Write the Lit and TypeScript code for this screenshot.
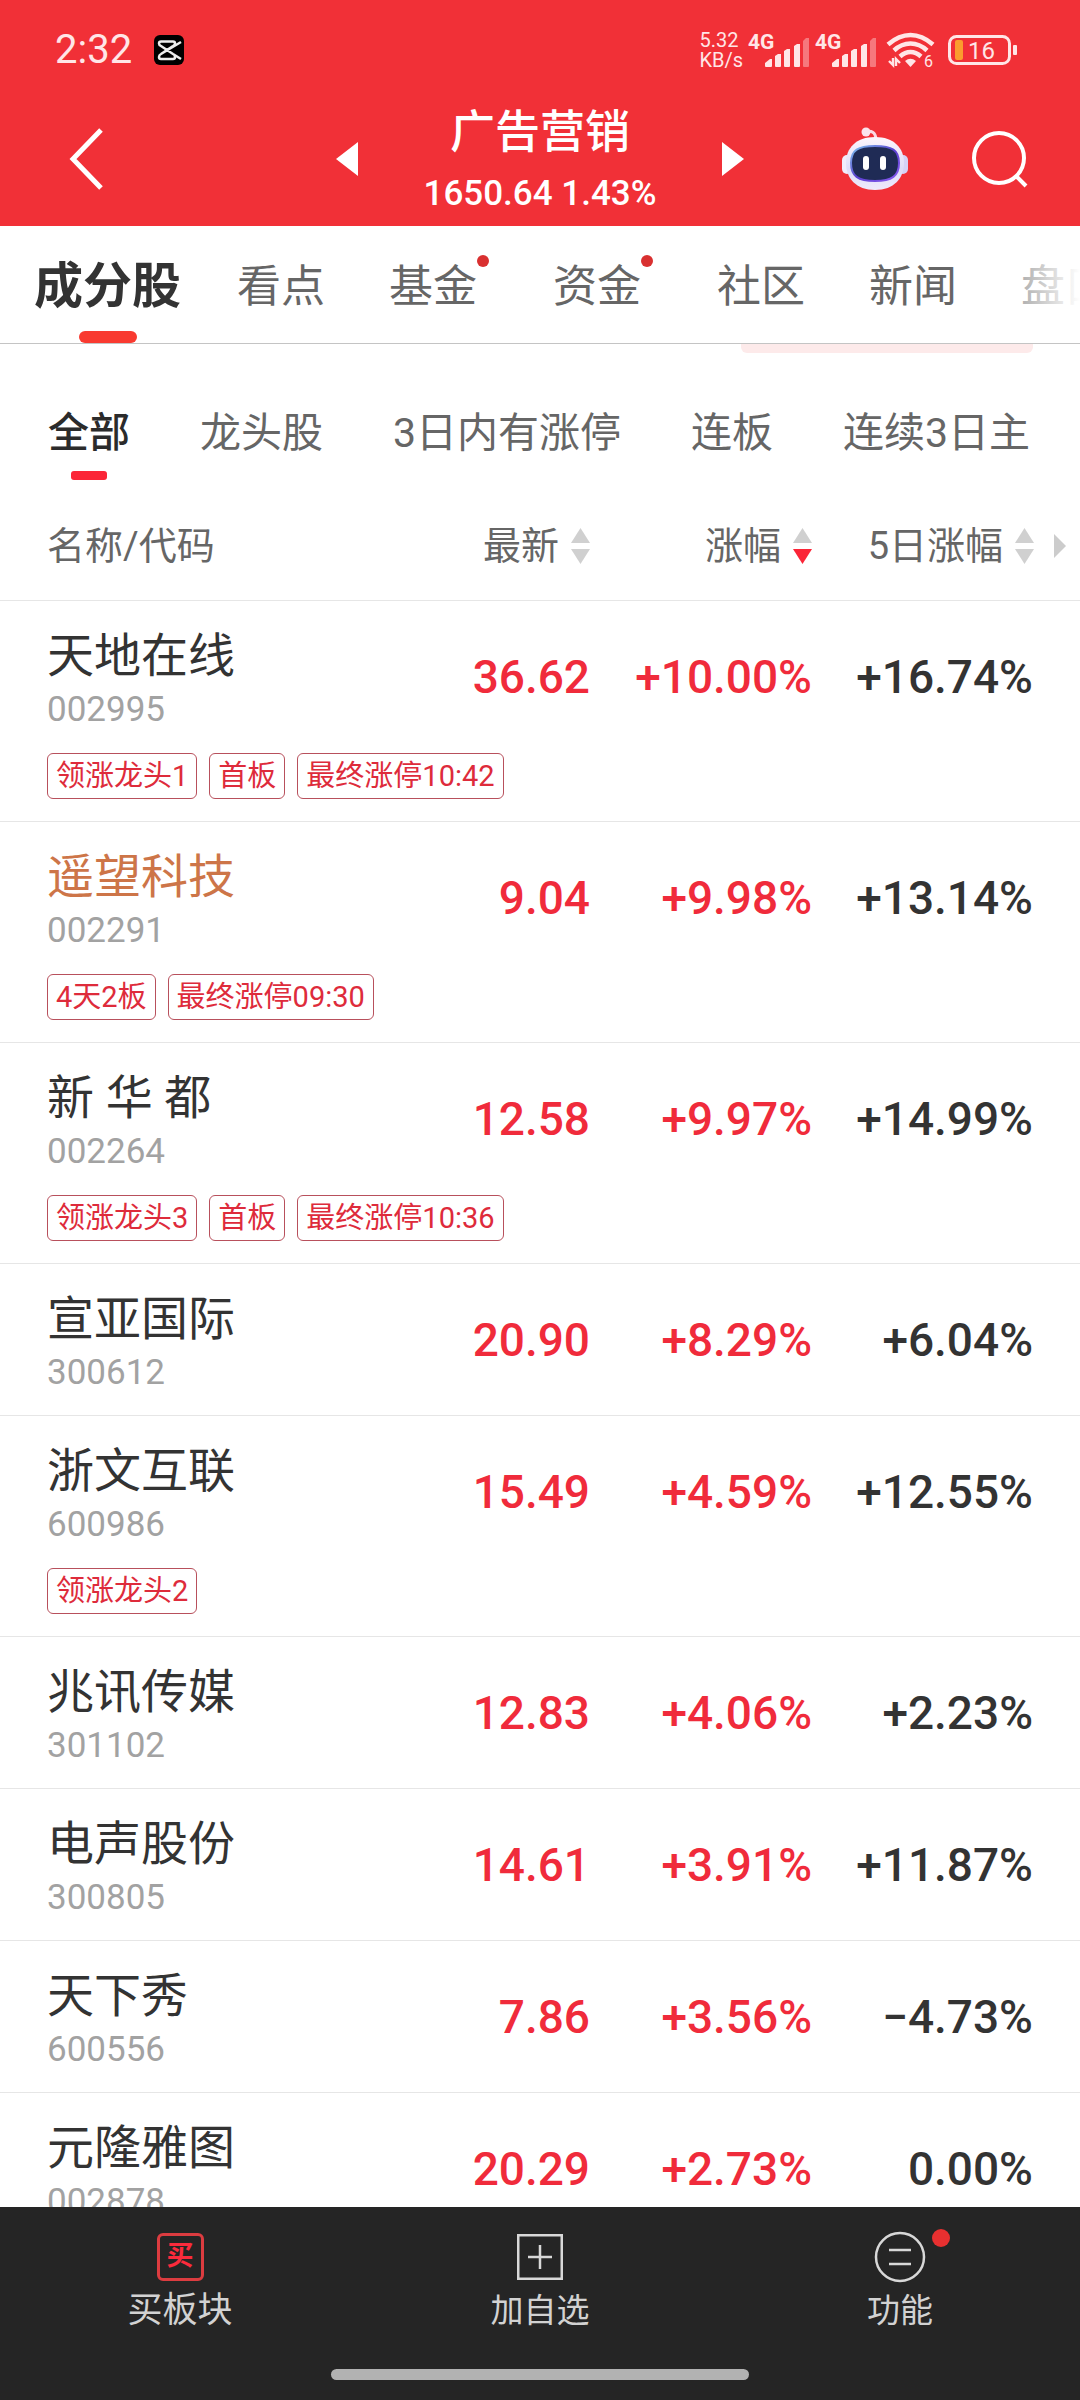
import { LitElement, html, css, svg, nothing } from "lit";
import { customElement, property, state } from "lit/decorators.js";
import { classMap } from "lit/directives/class-map.js";

interface Stock {
  name: string;
  code: string;
  price: string;
  change: string;
  fiveDay: string;
  held?: boolean;
  tags?: string[];
}

const STOCKS: Stock[] = [
  { name: "天地在线", code: "002995", price: "36.62", change: "+10.00%", fiveDay: "+16.74%", tags: ["领涨龙头1", "首板", "最终涨停10:42"] },
  { name: "遥望科技", code: "002291", price: "9.04", change: "+9.98%", fiveDay: "+13.14%", held: true, tags: ["4天2板", "最终涨停09:30"] },
  { name: "新 华 都", code: "002264", price: "12.58", change: "+9.97%", fiveDay: "+14.99%", tags: ["领涨龙头3", "首板", "最终涨停10:36"] },
  { name: "宣亚国际", code: "300612", price: "20.90", change: "+8.29%", fiveDay: "+6.04%" },
  { name: "浙文互联", code: "600986", price: "15.49", change: "+4.59%", fiveDay: "+12.55%", tags: ["领涨龙头2"] },
  { name: "兆讯传媒", code: "301102", price: "12.83", change: "+4.06%", fiveDay: "+2.23%" },
  { name: "电声股份", code: "300805", price: "14.61", change: "+3.91%", fiveDay: "+11.87%" },
  { name: "天下秀", code: "600556", price: "7.86", change: "+3.56%", fiveDay: "−4.73%" },
  { name: "元隆雅图", code: "002878", price: "20.29", change: "+2.73%", fiveDay: "0.00%" },
];

const TABS = [
  { label: "成分股" },
  { label: "看点" },
  { label: "基金", dot: true },
  { label: "资金", dot: true },
  { label: "社区" },
  { label: "新闻" },
  { label: "盘口" },
];

const FILTERS = ["全部", "龙头股", "3日内有涨停", "连板", "连续3日主"];

const FONT = css`Roboto, "Noto Sans CJK SC", sans-serif`;

const resets = css`
  :host,
  * {
    box-sizing: border-box;
  }
  button {
    appearance: none;
    margin: 0;
    padding: 0;
    border: 0;
    background: none;
    color: inherit;
    font: inherit;
    cursor: pointer;
  }
  svg {
    display: block;
    flex: none;
    overflow: visible;
  }
`;

/* Phone status bar: clock, network speed, signal, wifi, battery */
@customElement("status-bar")
class StatusBar extends LitElement {
  static styles = [
    resets,
    css`
      :host {
        display: flex;
        align-items: center;
        height: 100px;
        padding: 0 62px 0 55px;
        color: #ffe6e7;
      }
      .clock {
        font-size: 40px;
        line-height: 44px;
        margin-right: 22px;
      }
      .speed {
        margin-left: auto;
        margin-right: 5px;
        font-size: 20px;
        line-height: 20px;
      }
      .speed span {
        display: block;
      }
      .signal {
        margin-right: 5px;
      }
      .wifi {
        margin: 0 14px 0 5px;
      }
      text {
        font-family: ${FONT};
        fill: #ffe6e7;
      }
    `,
  ];

  private signal() {
    return svg`
      <svg class="signal" width="62" height="36" viewBox="0 0 62 36" role="img" aria-label="4G">
        <text x="0" y="17" font-size="21" font-weight="700">4G</text>
        <g fill="#ffe6e7">
          <path d="M17 34v-3l5-4h2v7q0 1-1 1h-5q-1 0-1-1z" />
          <path d="M27 34V24l3-2h3v12q0 1-1 1h-4q-1 0-1-1z" />
          <path d="M36 34V19l3-2h3v17q0 1-1 1h-4q-1 0-1-1z" />
          <path d="M46 34V14l3-2h3v22q0 1-1 1h-4q-1 0-1-1z" />
          <path d="M55 34V9l3-3h3v28q0 1-1 1h-4q-1 0-1-1z" opacity=".4" />
        </g>
      </svg>`;
  }

  render() {
    return html`
      <span class="clock">2:32</span>
      <svg width="30" height="30" viewBox="0 0 30 30" aria-hidden="true">
        <rect width="30" height="30" rx="6" fill="#000" />
        <path
          d="M27 7 7 19q-2 1-2 3v0q0 2 2 2h12q2 0 2-2v0q0-2-2-3L7 11q-2-1-2-2.500q0-2 2-2h12q2 0 2 2v0q0 1.500-2 2.500M7 19l12-8M19 19l8 5"
          fill="none" stroke="#eee" stroke-width="2.500" />
      </svg>
      <div class="speed"><span>5.32</span><span>KB/s</span></div>
      ${this.signal()}${this.signal()}
      <svg class="wifi" width="47" height="36" viewBox="0 0 47 36" role="img" aria-label="Wi-Fi">
        <g fill="none" stroke="#ffe6e7" stroke-width="4.500">
          <path d="M1 12.500Q12 3 23.500 3T46 12.500" />
          <path d="M7 18.500Q14.500 11.500 23.500 11.500T40 18.500" />
          <path d="M13 24.500Q18 20 23.500 20T34 24.500" />
        </g>
        <path d="M18 29q5.500-4.500 11 0l-5.500 6z" fill="#ffe6e7" />
        <path d="M2 29l4 4V26M9 34v-7l4 4" fill="none" stroke="#ffe6e7" stroke-width="2.400" />
        <text x="37" y="35" font-size="16">6</text>
      </svg>
      <svg width="70" height="32" viewBox="0 0 70 32" role="img" aria-label="16%">
        <rect x="1.500" y="2.500" width="60" height="27" rx="7" fill="none" stroke="#ffe6e7" stroke-width="3" />
        <rect x="7" y="6" width="8" height="20" rx="2" fill="#fb9d2e" />
        <rect x="65" y="11" width="4" height="10" rx="1" fill="#ffe6e7" />
        <text x="20" y="25" font-size="24">16</text>
      </svg>
    `;
  }
}

/* Red title bar with the sector name, its index and the page actions */
@customElement("title-bar")
class TitleBar extends LitElement {
  static styles = [
    resets,
    css`
      :host {
        display: grid;
        grid-template-columns: 1fr auto 1fr;
        padding-top: 4px;
        color: #fff;
      }
      .side {
        display: flex;
        align-items: center;
        padding-bottom: 12px;
      }
      .left {
        justify-content: space-between;
        padding-right: 66px;
        padding-left: 70px;
      }
      .right {
        padding-left: 66px;
        padding-right: 52px;
        gap: 64px;
      }
      .robot {
        margin-left: auto;
      }
      .title {
        text-align: center;
      }
      h1 {
        margin: 0;
        font-size: 45px;
        line-height: 58px;
        font-weight: 500;
      }
      p {
        margin: 0;
        font-size: 35px;
        line-height: 64px;
        font-weight: 500;
      }
    `,
  ];

  render() {
    return html`
      <div class="side left">
        <button aria-label="返回">
          <svg width="34" height="62" viewBox="0 0 34 62">
            <path d="M31 2 3 31l28 29" fill="none" stroke="#fff" stroke-width="5" />
          </svg>
        </button>
        <button aria-label="上一个">
          <svg width="22" height="34" viewBox="0 0 22 34"><path d="M22 0v34L0 17z" fill="#fff" /></svg>
        </button>
      </div>
      <div class="title">
        <h1>广告营销</h1>
        <p>1650.64 1.43%</p>
      </div>
      <div class="side right">
        <button aria-label="下一个">
          <svg width="22" height="34" viewBox="0 0 22 34"><path d="M0 0v34l22-17z" fill="#fff" /></svg>
        </button>
        <button class="robot" aria-label="智能助手">
          <svg width="66" height="64" viewBox="0 0 66 64">
            <defs>
              <linearGradient id="shell" x1="0" y1="0" x2="0" y2="1">
                <stop offset="0" stop-color="#fdf6fc" />
                <stop offset=".6" stop-color="#dedcf8" />
                <stop offset="1" stop-color="#efeafc" />
              </linearGradient>
              <linearGradient id="rim" x1="0" y1="0" x2="1" y2="1">
                <stop offset="0" stop-color="#7fc6ee" />
                <stop offset=".5" stop-color="#5a3fd0" />
                <stop offset="1" stop-color="#8a5cf0" />
              </linearGradient>
            </defs>
            <path d="M23 5q10-3 11 7" fill="none" stroke="#fbd9e4" stroke-width="3" />
            <circle cx="24" cy="5" r="4.500" fill="#fbe3ec" />
            <rect x="0" y="28" width="10" height="19" rx="5" fill="#f1ecfb" />
            <rect x="56" y="28" width="10" height="19" rx="5" fill="#d6d2f7" />
            <path d="M33 10c19 0 29 11 29 26S52 63 33 63 4 51 4 36s10-26 29-26z" fill="url(#shell)" />
            <path d="M33 19c17 0 24 4 24 17s-7 18-24 18S9 49 9 36s7-17 24-17z" fill="#1f2b55" stroke="url(#rim)" stroke-width="2" />
            <rect x="21" y="29" width="6" height="14" rx="3" fill="#fff" />
            <rect x="38" y="29" width="6" height="14" rx="3" fill="#fff" />
          </svg>
        </button>
        <button aria-label="搜索">
          <svg width="56" height="56" viewBox="0 0 56 56">
            <g fill="none" stroke="#fff" stroke-width="4">
              <circle cx="27" cy="27" r="25" />
              <path d="M44 45l10 10" />
            </g>
          </svg>
        </button>
      </div>
    `;
  }
}

/* Pair of up/down arrows beside a sortable column heading */
@customElement("sort-arrows")
class SortArrows extends LitElement {
  @property() direction = "";
  static styles = [
    resets,
    css`
      :host {
        display: block;
      }
      .idle {
        fill: #d0d0d0;
      }
      .on {
        fill: #fb2537;
      }
    `,
  ];
  render() {
    return html`
      <svg width="19" height="36" viewBox="0 0 19 36" aria-hidden="true">
        <path class=${this.direction === "asc" ? "on" : "idle"} d="M9.500 0 19 15H0z" />
        <path class=${this.direction === "desc" ? "on" : "idle"} d="M0 21h19L9.500 36z" />
      </svg>
    `;
  }
}

/* Main tabs and the quick filters below them */
@customElement("tab-strip")
class TabStrip extends LitElement {
  @state() private tab = 0;
  @state() private filter = 0;

  static styles = [
    resets,
    css`
      :host {
        display: block;
      }
      .tabs {
        position: relative;
        display: flex;
        height: 118px;
        padding-left: 10px;
        border-bottom: 1px solid #c4c4c4;
        overflow: hidden;
        color: #666;
      }
      .tabs::after {
        content: "";
        position: absolute;
        top: 0;
        right: 0;
        bottom: 0;
        width: 80px;
        background: linear-gradient(to right, rgba(255, 255, 255, 0.3), #fff);
        pointer-events: none;
      }
      .tab {
        position: relative;
        display: flex;
        flex: none;
        padding: 5px 32px 0;
        font-size: 44px;
        line-height: 112px;
      }
      .tab.on {
        padding: 5px 24px 0;
        font-size: 49px;
        font-weight: 700;
        color: #333;
      }
      .tab.on::after {
        content: "";
        position: absolute;
        left: 50%;
        bottom: 0;
        width: 58px;
        height: 12px;
        margin-left: -29px;
        border-radius: 6px;
        background: #f93a30;
      }
      .dot {
        width: 12px;
        height: 12px;
        margin-top: 24px;
        border-radius: 50%;
        background: #d93030;
      }
      .promo {
        width: 292px;
        height: 9px;
        margin: 0 47px 0 auto;
        border-radius: 0 0 6px 6px;
        background: #fdeaea;
      }
      .filters {
        display: flex;
        gap: 70px;
        padding: 45px 47px 0 48px;
        overflow: hidden;
        color: #666;
      }
      .filter {
        flex: none;
        font-size: 41px;
        line-height: 70px;
      }
      .filter::after {
        content: "";
        display: block;
        width: 36px;
        height: 9px;
        margin: 3px auto 0;
        border-radius: 3px;
      }
      .filter.on {
        font-weight: 500;
        color: #2b2b2b;
      }
      .filter.on::after {
        background: #fb2537;
      }
    `,
  ];

  render() {
    return html`
      <nav class="tabs">
        ${TABS.map(
          (t, i) => html`<button class=${classMap({ tab: true, on: i === this.tab })} @click=${() => (this.tab = i)}>
            ${t.label}${t.dot ? html`<span class="dot"></span>` : nothing}
          </button>`,
        )}
      </nav>
      <div class="promo"></div>
      <div class="filters">
        ${FILTERS.map(
          (f, i) => html`<button class=${classMap({ filter: true, on: i === this.filter })} @click=${() => (this.filter = i)}>${f}</button>`,
        )}
      </div>
    `;
  }
}

/* Constituent stocks of the sector */
@customElement("stock-table")
class StockTable extends LitElement {
  static styles = [
    resets,
    css`
      :host {
        display: block;
      }
      table {
        width: 100%;
        table-layout: fixed;
        border-collapse: separate;
        border-spacing: 0;
      }
      .col-value {
        width: 222px;
      }
      .col-last {
        width: 268px;
      }
      th {
        height: 121px;
        padding: 12px 0 0;
        border-bottom: 1px solid #e6e6e6;
        font-size: 38px;
        font-weight: 400;
        line-height: 56px;
        color: #666;
        text-align: left;
        white-space: nowrap;
      }
      .first {
        padding-left: 47px;
      }
      .sort {
        display: flex;
        align-items: center;
        gap: 12px;
        margin-left: auto;
      }
      .scroll {
        display: flex;
        align-items: center;
        gap: 20px;
        padding-right: 14px;
      }
      td {
        padding: 0;
      }
      .who {
        padding: 23px 0 20px 47px;
      }
      .name {
        display: block;
        font-size: 47px;
        line-height: 64px;
        color: #333;
      }
      .held {
        color: #cd7548;
      }
      .code {
        display: block;
        font-size: 35px;
        line-height: 44px;
        color: #a2a2a2;
      }
      .num {
        font-size: 46px;
        font-weight: 500;
        line-height: 56px;
        text-align: right;
        white-space: nowrap;
        color: #333;
      }
      .up {
        color: #f02b3b;
      }
      .num.last {
        padding-right: 47px;
      }
      .end > td {
        border-bottom: 1px solid #e6e6e6;
      }
      .tags {
        display: flex;
        gap: 12px;
        padding: 1px 47px 22px;
      }
      .tag {
        height: 46px;
        padding: 0 8px;
        border: 1px solid #b8505c;
        border-radius: 6px;
        font-size: 29px;
        line-height: 45px;
        white-space: nowrap;
        color: #de2b3b;
      }
    `,
  ];

  render() {
    return html`
      <table>
        <colgroup>
          <col />
          <col class="col-value" />
          <col class="col-value" />
          <col class="col-last" />
        </colgroup>
        <thead>
          <tr>
            <th class="first" scope="col">名称/代码</th>
            <th scope="col"><button class="sort">最新<sort-arrows></sort-arrows></button></th>
            <th scope="col" aria-sort="descending"><button class="sort">涨幅<sort-arrows direction="desc"></sort-arrows></button></th>
            <th scope="col">
              <div class="scroll">
                <button class="sort">5日涨幅<sort-arrows></sort-arrows></button>
                <svg width="12" height="24" viewBox="0 0 12 24" aria-hidden="true"><path d="M0 0l12 12L0 24z" fill="#ccc" /></svg>
              </div>
            </th>
          </tr>
        </thead>
        ${STOCKS.map(
          (s) => html`<tbody>
            <tr class=${classMap({ end: !s.tags })}>
              <td class="who">
                <span class=${classMap({ name: true, held: !!s.held })}>${s.name}</span>
                <span class="code">${s.code}</span>
              </td>
              <td class="num up">${s.price}</td>
              <td class="num up">${s.change}</td>
              <td class="num last">${s.fiveDay}</td>
            </tr>
            ${s.tags
              ? html`<tr class="end">
                  <td colspan="4"><div class="tags">${s.tags.map((t) => html`<span class="tag">${t}</span>`)}</div></td>
                </tr>`
              : nothing}
          </tbody>`,
        )}
      </table>
    `;
  }
}

/* Dark action bar with the system home indicator */
@customElement("action-bar")
class ActionBar extends LitElement {
  static styles = [
    resets,
    css`
      :host {
        display: block;
        padding: 24px 0 20px;
        background: #252525;
        color: #d2d2d2;
      }
      .actions {
        display: grid;
        grid-template-columns: repeat(3, 1fr);
        padding-bottom: 34px;
      }
      .action {
        display: flex;
        flex-direction: column;
        align-items: center;
        font-size: 33px;
        line-height: 48px;
        gap: 4px;
      }
      .action.buy {
        font-size: 35px;
      }
      .icon {
        position: relative;
        display: flex;
        align-items: center;
        height: 52px;
      }
      .stamp {
        display: block;
        width: 47px;
        height: 48px;
        border: 3px solid #dc3c40;
        border-radius: 6px;
        font-size: 27px;
        font-weight: 700;
        line-height: 41px;
        text-align: center;
        color: #fb2b3c;
      }
      .dot {
        position: absolute;
        top: -2px;
        right: -24px;
        width: 18px;
        height: 18px;
        border-radius: 50%;
        background: #e83030;
      }
      .home {
        width: 418px;
        height: 11px;
        margin: 0 auto;
        border-radius: 6px;
        background: #b2b2b2;
      }
    `,
  ];

  render() {
    return html`
      <div class="actions">
        <button class="action buy"><span class="icon"><span class="stamp">买</span></span>买板块</button>
        <button class="action">
          <span class="icon">
            <svg width="46" height="46" viewBox="0 0 46 46" fill="none" stroke="#d8d8d8" stroke-width="2.500">
              <path d="M1.250 1.250h43.500v43.500H1.250zM23 11v24M11 23h24" />
            </svg>
          </span>
          加自选
        </button>
        <button class="action">
          <span class="icon">
            <svg width="52" height="52" viewBox="0 0 52 52" fill="none" stroke="#d8d8d8" stroke-width="2.500">
              <circle cx="26" cy="26" r="24" />
              <path d="M15 19h22M15 33h22" />
            </svg>
            <span class="dot"></span>
          </span>
          功能
        </button>
      </div>
      <div class="home"></div>
    `;
  }
}

@customElement("app-root")
class AppRoot extends LitElement {
  static styles = css`
    :host {
      display: flex;
      flex-direction: column;
      height: 100vh;
      background: #fff;
      font-family: ${FONT};
    }
    .top {
      flex: none;
      background: #f13037;
    }
    main {
      flex: 1;
      min-height: 0;
      overflow: hidden;
    }
    action-bar {
      flex: none;
    }
  `;

  render() {
    return html`
      <header class="top">
        <status-bar></status-bar>
        <title-bar></title-bar>
      </header>
      <main>
        <tab-strip></tab-strip>
        <stock-table></stock-table>
      </main>
      <action-bar></action-bar>
    `;
  }
}
